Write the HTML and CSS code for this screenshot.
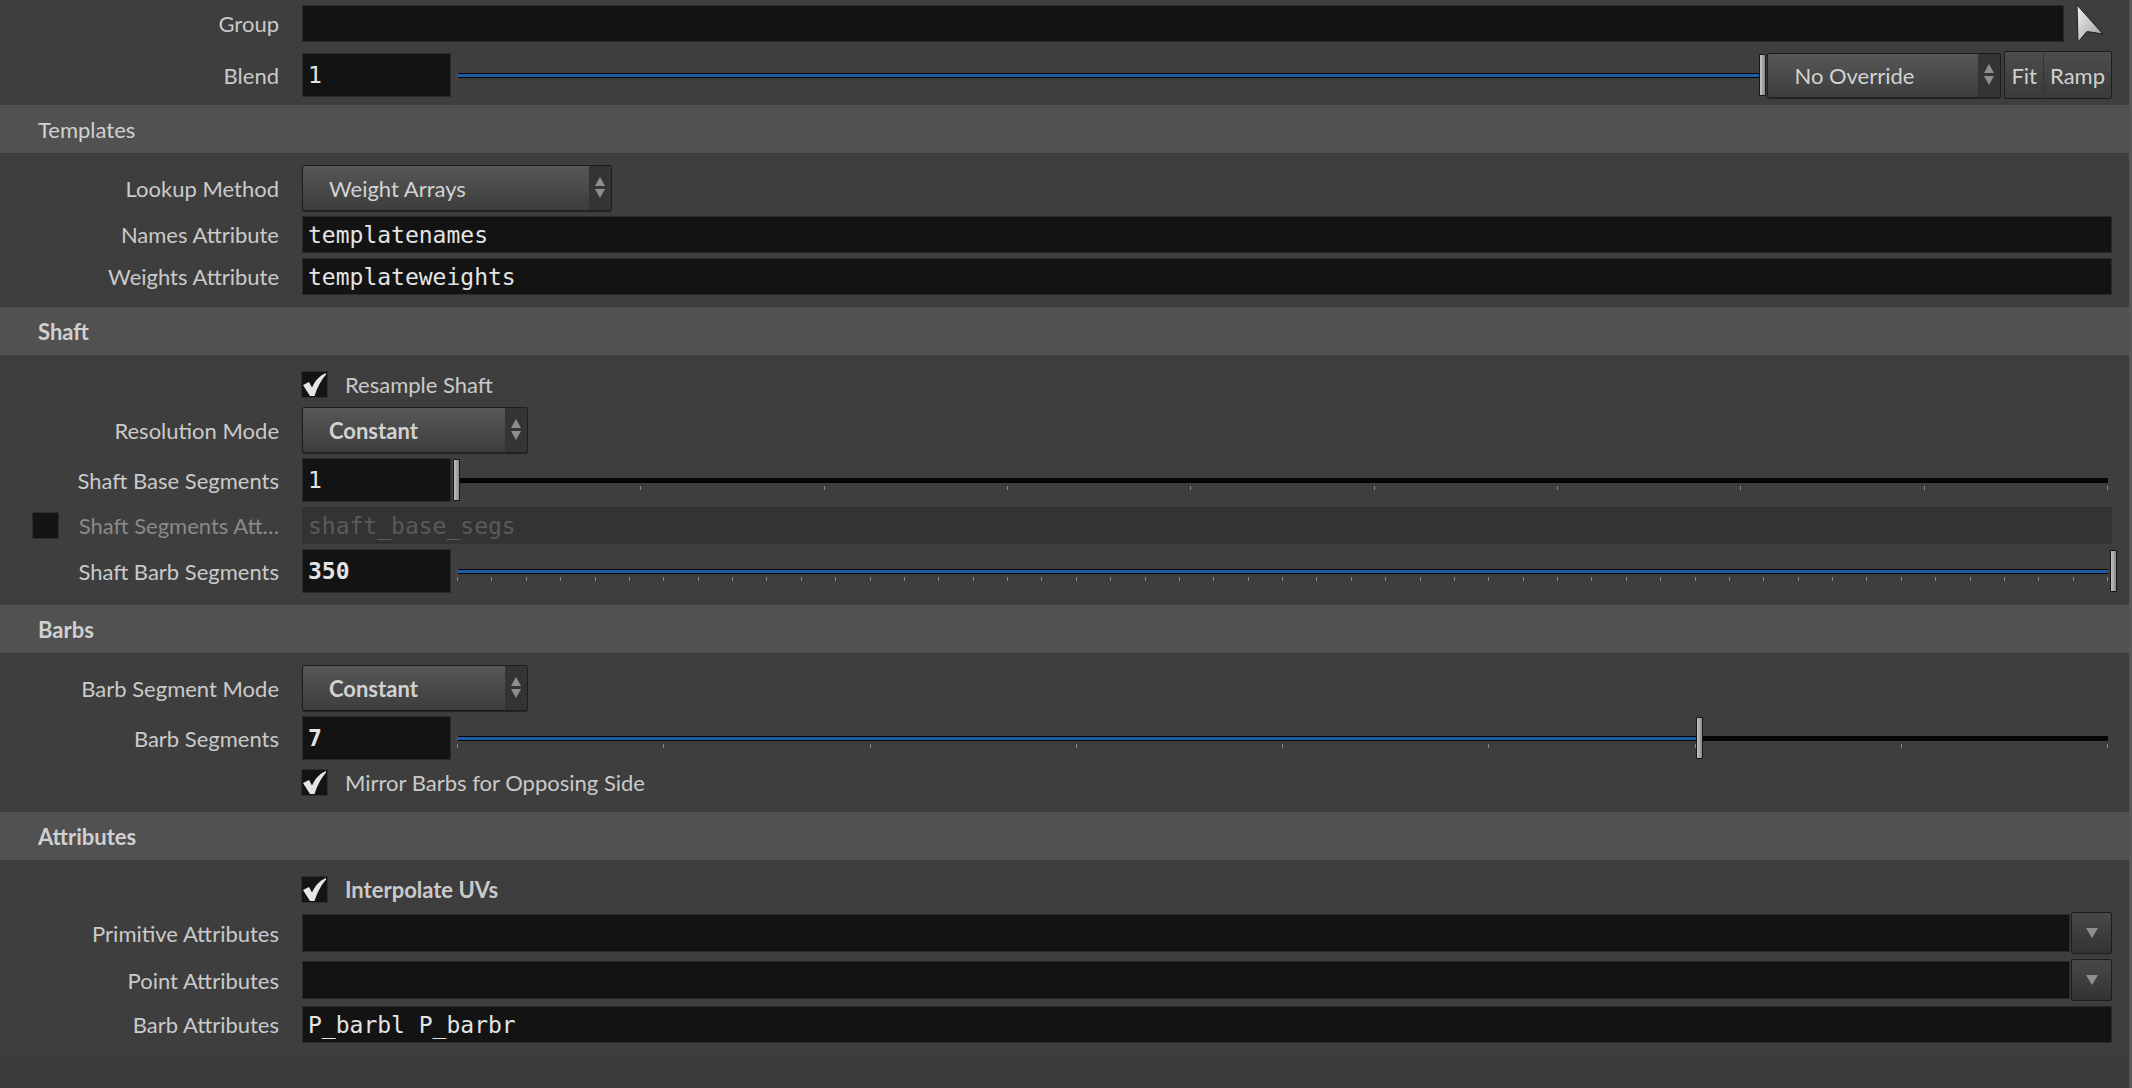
FILE: index.html
```html
<!DOCTYPE html>
<html lang="en">
<head>
    <meta charset="UTF-8">
    <title>Parameters</title>
    <link rel="stylesheet" href="styles.css">
</head>
<body>
<div class="pane">

    <div class="params top">
        <div class="row">
            <span class="lbl">Group</span>
            <div class="field"></div>
            <span class="pick">
                <svg width="30" height="40" viewBox="0 0 30 40">
                    <defs>
                        <linearGradient id="arrowfill" x1="0" y1="0" x2="1" y2="1">
                            <stop offset="0" stop-color="#f2f2f2"/>
                            <stop offset="1" stop-color="#9a9a9a"/>
                        </linearGradient>
                    </defs>
                    <polygon points="2,1 28,30 12,27.5 3,38" fill="url(#arrowfill)" stroke="#1e1e1e" stroke-width="1"/>
                </svg>
            </span>
        </div>
        <div class="row row-blend">
            <span class="lbl">Blend</span>
            <div class="field num">1</div>
            <div class="slider">
                <div class="rail">
                    <div class="track"><div class="fill" style="width:100%"></div></div>
                    <div class="ticks"></div>
                </div>
                <span class="handle" style="left:100%"></span>
            </div>
            <div class="menu menu-override">No Override
                <span class="spin"><svg width="12" height="24" viewBox="0 0 12 24"><path d="M6 1 L11 10 L1 10 Z M1 13 L11 13 L6 22 Z" fill="#8e8e8e"/></svg></span>
            </div>
            <div class="btns"><span>Fit</span><span>Ramp</span></div>
        </div>
    </div>

    <div class="folder">
        <div class="folder-head">Templates</div>
        <div class="params">
            <div class="row row-menu">
                <span class="lbl">Lookup Method</span>
                <div class="menu menu-wide">Weight Arrays
                    <span class="spin"><svg width="12" height="24" viewBox="0 0 12 24"><path d="M6 1 L11 10 L1 10 Z M1 13 L11 13 L6 22 Z" fill="#8e8e8e"/></svg></span>
                </div>
            </div>
            <div class="row">
                <span class="lbl">Names Attribute</span>
                <div class="field">templatenames</div>
            </div>
            <div class="row">
                <span class="lbl">Weights Attribute</span>
                <div class="field">templateweights</div>
            </div>
        </div>
    </div>

    <div class="folder">
        <div class="folder-head strong">Shaft</div>
        <div class="params">
            <div class="row row-check">
                <span class="lbl"></span>
                <span class="check">
                    <svg width="25" height="25" viewBox="0 0 25 25"><path d="M1 13 L7 10 L10 15.5 C13 9 17 4 24 1 L24 2.5 C19 8 15.5 15 12.5 24 L8 24 Z" fill="#e6e6e6"/></svg>
                </span>
                <span class="check-text">Resample Shaft</span>
            </div>
            <div class="row row-menu">
                <span class="lbl">Resolution Mode</span>
                <div class="menu strong">Constant
                    <span class="spin"><svg width="12" height="24" viewBox="0 0 12 24"><path d="M6 1 L11 10 L1 10 Z M1 13 L11 13 L6 22 Z" fill="#8e8e8e"/></svg></span>
                </div>
            </div>
            <div class="row row-slider">
                <span class="lbl">Shaft Base Segments</span>
                <div class="field num">1</div>
                <div class="slider">
                    <div class="rail">
                        <div class="track"><div class="fill" style="width:0%"></div></div>
                        <div class="ticks">
                            <i></i><i></i><i></i><i></i><i></i><i></i><i></i><i></i><i></i><i></i>
                        </div>
                    </div>
                    <span class="handle" style="left:0%"></span>
                </div>
            </div>
            <div class="row off">
                <span class="lbl lbl-toggle"><span class="check"></span><span>Shaft Segments Att…</span></span>
                <div class="field">shaft_base_segs</div>
            </div>
            <div class="row row-slider">
                <span class="lbl">Shaft Barb Segments</span>
                <div class="field num strong">350</div>
                <div class="slider">
                    <div class="rail">
                        <div class="track"><div class="fill" style="width:100%"></div></div>
                        <div class="ticks">
                            <i></i><i></i><i></i><i></i><i></i><i></i><i></i><i></i><i></i><i></i>
                            <i></i><i></i><i></i><i></i><i></i><i></i><i></i><i></i><i></i><i></i>
                            <i></i><i></i><i></i><i></i><i></i><i></i><i></i><i></i><i></i><i></i>
                            <i></i><i></i><i></i><i></i><i></i><i></i><i></i><i></i><i></i><i></i>
                            <i></i><i></i><i></i><i></i><i></i><i></i><i></i><i></i><i></i>
                        </div>
                    </div>
                    <span class="handle" style="left:100%"></span>
                </div>
            </div>
        </div>
    </div>

    <div class="folder">
        <div class="folder-head strong">Barbs</div>
        <div class="params">
            <div class="row row-menu">
                <span class="lbl">Barb Segment Mode</span>
                <div class="menu strong">Constant
                    <span class="spin"><svg width="12" height="24" viewBox="0 0 12 24"><path d="M6 1 L11 10 L1 10 Z M1 13 L11 13 L6 22 Z" fill="#8e8e8e"/></svg></span>
                </div>
            </div>
            <div class="row row-slider">
                <span class="lbl">Barb Segments</span>
                <div class="field num strong">7</div>
                <div class="slider">
                    <div class="rail">
                        <div class="track"><div class="fill" style="width:75%"></div></div>
                        <div class="ticks">
                            <i></i><i></i><i></i><i></i><i></i><i></i><i></i><i></i><i></i>
                        </div>
                    </div>
                    <span class="handle" style="left:75%"></span>
                </div>
            </div>
            <div class="row row-check">
                <span class="lbl"></span>
                <span class="check">
                    <svg width="25" height="25" viewBox="0 0 25 25"><path d="M1 13 L7 10 L10 15.5 C13 9 17 4 24 1 L24 2.5 C19 8 15.5 15 12.5 24 L8 24 Z" fill="#e6e6e6"/></svg>
                </span>
                <span class="check-text">Mirror Barbs for Opposing Side</span>
            </div>
        </div>
    </div>

    <div class="folder">
        <div class="folder-head strong">Attributes</div>
        <div class="params">
            <div class="row row-check">
                <span class="lbl"></span>
                <span class="check">
                    <svg width="25" height="25" viewBox="0 0 25 25"><path d="M1 13 L7 10 L10 15.5 C13 9 17 4 24 1 L24 2.5 C19 8 15.5 15 12.5 24 L8 24 Z" fill="#e6e6e6"/></svg>
                </span>
                <span class="check-text strong">Interpolate UVs</span>
            </div>
            <div class="row row-btn">
                <span class="lbl">Primitive Attributes</span>
                <div class="field"></div>
                <span class="drop-btn"><svg width="12" height="10" viewBox="0 0 12 10"><path d="M0 0 L12 0 L6 10 Z" fill="#8e8e8e"/></svg></span>
            </div>
            <div class="row row-btn">
                <span class="lbl">Point Attributes</span>
                <div class="field"></div>
                <span class="drop-btn"><svg width="12" height="10" viewBox="0 0 12 10"><path d="M0 0 L12 0 L6 10 Z" fill="#8e8e8e"/></svg></span>
            </div>
            <div class="row">
                <span class="lbl">Barb Attributes</span>
                <div class="field">P_barbl P_barbr</div>
            </div>
        </div>
    </div>

</div>
</body>
</html>
```

FILE: styles.css
```css
body {
    margin: 0;
    overflow: hidden;
    background: #3b3b3b;
    font-family: Lato, "Liberation Sans", sans-serif;
    font-size: 22px;
    color: #cacaca;
}
.pane {
    height: 100vh;
    border-right: 3px solid #575757;
}
.params {
    display: flex;
    flex-direction: column;
    gap: 5px;
    padding: 12px 17px 12px 0;
    background: #3e3e3e;
}
.params.top {
    padding: 5px 17px 6px 0;
    gap: 9px;
}
.folder-head {
    height: 48px;
    display: flex;
    align-items: center;
    padding-left: 38px;
    background: #515151;
    color: #d0d0d0;
}
.strong { font-weight: bold; }

.row {
    display: flex;
    align-items: center;
    height: 37px;
}
.row-blend { height: 48px; }
.row-slider { height: 44px; }
.row-menu { height: 46px; }
.row-check { height: 35px; }
.row-btn { height: 42px; }

.lbl {
    flex: none;
    width: 279px;
    margin-right: 23px;
    text-align: right;
    white-space: nowrap;
}
.field {
    flex: 1;
    height: 100%;
    box-sizing: border-box;
    display: flex;
    align-items: center;
    padding-left: 5px;
    background: #131313;
    border: 1px solid #2a2a2a;
    font-family: "DejaVu Sans Mono", monospace;
    font-size: 23px;
    color: #e4e4e4;
}
.field.num {
    flex: none;
    width: 149px;
}
.row-blend .field { height: 44px; }
.row-btn .field { height: 38px; }

/* sliders */
.slider {
    flex: 1;
    position: relative;
    align-self: stretch;
    display: flex;
    align-items: center;
    margin-left: 4px;
    padding: 0 4px 0 2px;
}
.rail {
    flex: 1;
    padding-top: 7px;
}
.track {
    height: 5px;
    box-sizing: border-box;
    padding-top: 1px;
    background: #050505;
    border-left: 1px solid #555;
}
.fill {
    height: 3px;
    background: #1f5ca8;
}
.ticks {
    display: flex;
    justify-content: space-between;
    height: 4px;
    margin-top: 3px;
}
.ticks i {
    width: 1px;
    background: #8a8a8a;
}
.handle {
    position: absolute;
    top: 50%;
    width: 7px;
    height: 42px;
    margin-left: -2px;
    transform: translateY(-50%);
    box-sizing: border-box;
    border: 1px solid #151515;
    border-radius: 1px;
    background: linear-gradient(90deg, #c4c4c4, #8a8a8a);
}
.row-blend .slider .handle { margin-left: -5px; }

/* menus and buttons */
.menu {
    flex: none;
    width: 226px;
    height: 46px;
    box-sizing: border-box;
    display: flex;
    align-items: center;
    padding-left: 26px;
    border: 1px solid #1d1d1d;
    border-radius: 2px;
    background: linear-gradient(#575757, #3d3d3d);
    color: #d2d2d2;
    box-shadow: 0 1px 1px rgba(0,0,0,0.4);
}
.menu-wide { width: 310px; }
.menu-override {
    width: 234px;
    height: 45px;
    margin-left: 3px;
}
.spin {
    margin-left: auto;
    width: 22px;
    height: 100%;
    display: flex;
    align-items: center;
    justify-content: center;
    background: #343434;
}
.btns {
    flex: none;
    display: flex;
    height: 48px;
    margin-left: 3px;
    box-sizing: border-box;
    border: 1px solid #1d1d1d;
    border-radius: 2px;
    background: linear-gradient(#4d4d4d, #3a3a3a);
    color: #d0d0d0;
}
.btns span {
    display: flex;
    align-items: center;
    padding: 0 6px;
}
.btns span + span { border-left: 1px solid #343434; }

.pick {
    flex: none;
    width: 48px;
    display: flex;
    justify-content: center;
    padding-left: 4px;
    box-sizing: border-box;
}
.drop-btn {
    flex: none;
    width: 41px;
    height: 42px;
    margin-left: 1px;
    box-sizing: border-box;
    display: flex;
    align-items: center;
    justify-content: center;
    border: 1px solid #1d1d1d;
    border-radius: 2px;
    background: linear-gradient(#484848, #333333);
}

/* toggles */
.check {
    flex: none;
    width: 27px;
    height: 27px;
    box-sizing: border-box;
    display: flex;
    align-items: center;
    justify-content: center;
    margin-left: -1px;
    background: #141414;
    border: 1px solid #2e2e2e;
}
.check-text { margin-left: 17px; }
.lbl-toggle {
    display: flex;
    align-items: center;
    justify-content: space-between;
    padding-left: 32px;
    box-sizing: border-box;
}
.lbl-toggle .check { margin-left: 0; }
.off .lbl { color: #8a8a8a; }
.off .field {
    background: #333333;
    border-color: #333333;
    color: #5a5a5a;
}
```
